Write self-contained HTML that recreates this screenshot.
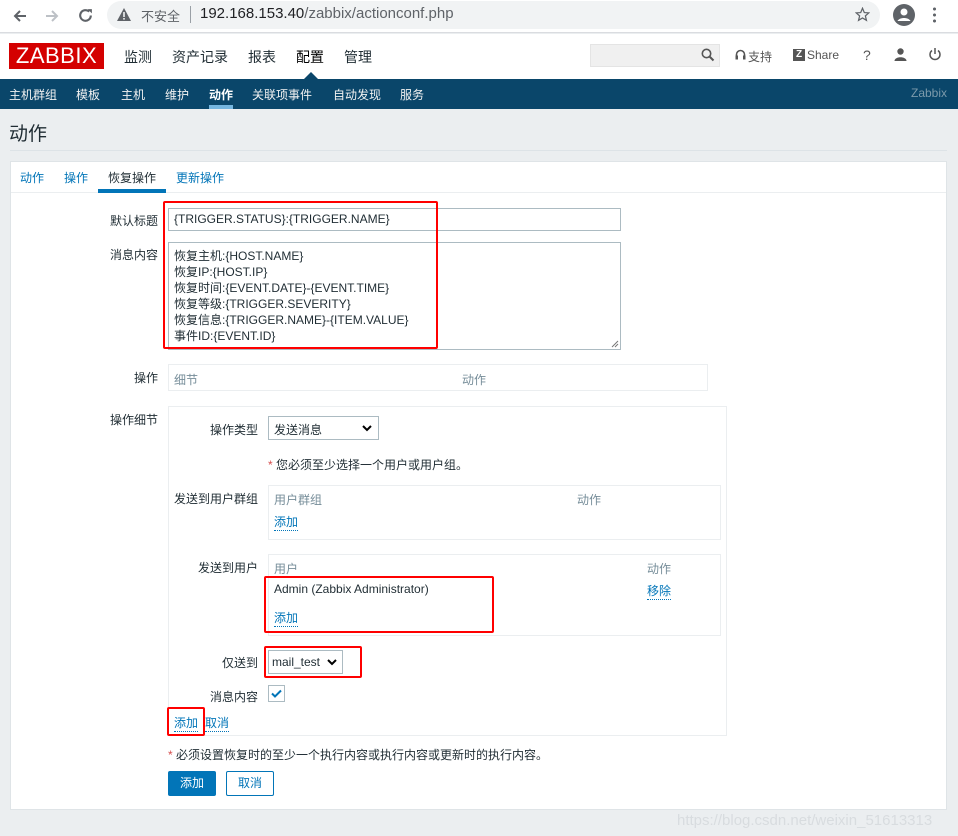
<!DOCTYPE html>
<html><head><meta charset="utf-8"><style>
*{margin:0;padding:0;box-sizing:border-box}
body{width:958px;height:836px;background:#ebeef0;font-family:"Liberation Sans","Noto Sans CJK SC",sans-serif;font-size:12px;color:#1f2c33;position:relative;overflow:hidden}
.a{position:absolute;white-space:nowrap}
.lnk{color:#0275b8;border-bottom:1px dotted #0275b8}
.gray{color:#768d99}
.red{position:absolute;border:2px solid #f00;border-radius:2px}
.inp{position:absolute;border:1px solid #acbbc2;background:#fff}
</style></head><body>
<div class="a" style="left:0;top:0;width:958px;height:33px;background:#fff;border-bottom:1px solid #dadce0"></div>
<svg class="a" style="left:12px;top:8px" width="16" height="16" viewBox="0 0 16 16"><path d="M14 8H3M8 3L3 8l5 5" stroke="#5f6368" stroke-width="2" fill="none"/></svg>
<svg class="a" style="left:44px;top:8px" width="16" height="16" viewBox="0 0 16 16"><path d="M2 8h11M8 3l5 5-5 5" stroke="#bdc1c6" stroke-width="2" fill="none"/></svg>
<svg class="a" style="left:77px;top:7px" width="17" height="17" viewBox="0 0 16 16"><path d="M13 8a5 5 0 1 1-1.5-3.6" stroke="#5f6368" stroke-width="2" fill="none"/><path d="M10 2h4v4z" fill="#5f6368"/></svg>
<div class="a" style="left:107px;top:1px;width:773px;height:28px;background:#f1f3f4;border-radius:14px"></div>
<svg class="a" style="left:117px;top:8px" width="14" height="13" viewBox="0 0 14 13"><path d="M7 0L14 13H0z" fill="#5f6368"/><rect x="6.2" y="4" width="1.6" height="5" fill="#f1f3f4"/><rect x="6.2" y="10" width="1.6" height="1.6" fill="#f1f3f4"/></svg>
<div class="a" style="left:141px;top:6px;font-size:13px;color:#5f6368">不安全</div>
<div class="a" style="left:190px;top:6px;width:1px;height:17px;background:#9aa0a6"></div>
<div class="a" style="left:200px;top:5px;font-size:15px;color:#202124">192.168.153.40<span style="color:#5f6368">/zabbix/actionconf.php</span></div>
<svg class="a" style="left:855px;top:7px" width="15" height="15" viewBox="0 0 24 24"><path d="M12 2l2.9 6.9 7.1.6-5.4 4.7 1.7 7.1L12 17.5 5.7 21.3l1.7-7.1L2 9.5l7.1-.6z" stroke="#5f6368" stroke-width="2" fill="none"/></svg>
<svg class="a" style="left:893px;top:4px" width="22" height="22" viewBox="0 0 22 22"><circle cx="11" cy="11" r="11" fill="#5f6368"/><circle cx="11" cy="8" r="3.5" fill="#fff"/><path d="M4.5 17c2-4 11-4 13 0" fill="#fff"/></svg>
<div class="a" style="left:933px;top:6px;width:3px;height:18px;background:radial-gradient(circle,#5f6368 1.4px,transparent 1.6px) 0 0/3px 6px"></div>
<div class="a" style="left:0;top:34px;width:958px;height:45px;background:#fff"></div>
<div class="a" style="left:9px;top:43px;width:95px;height:26px;background:#d40000;color:#fff;font-size:22px;line-height:26px;text-align:center;letter-spacing:0.5px">ZABBIX</div>
<div class="a" style="left:124px;top:47px;font-size:14px">监测</div>
<div class="a" style="left:172px;top:47px;font-size:14px">资产记录</div>
<div class="a" style="left:248px;top:47px;font-size:14px">报表</div>
<div class="a" style="left:296px;top:47px;font-size:14px;color:#000">配置</div>
<div class="a" style="left:344px;top:47px;font-size:14px">管理</div>
<div class="a" style="left:304px;top:72px;width:0;height:0;border-left:7px solid transparent;border-right:7px solid transparent;border-bottom:7px solid #0a466a"></div>
<div class="a" style="left:590px;top:44px;width:130px;height:23px;background:#f0f0f0;border:1px solid #e4e4e4"></div>
<svg class="a" style="left:701px;top:48px" width="14" height="14" viewBox="0 0 14 14"><circle cx="5.5" cy="5.5" r="4.2" stroke="#555" stroke-width="1.6" fill="none"/><path d="M8.5 8.5l4 4" stroke="#555" stroke-width="2"/></svg>
<svg class="a" style="left:735px;top:49px" width="11" height="12" viewBox="0 0 11 12"><path d="M1.5 8V5.5a4 4 0 0 1 8 0V8" stroke="#555" stroke-width="1.6" fill="none"/><rect x="0.5" y="6.5" width="2.5" height="4" fill="#555"/><rect x="8" y="6.5" width="2.5" height="4" fill="#555"/></svg>
<div class="a" style="left:748px;top:48px;font-size:12px;color:#555">支持</div>
<div class="a" style="left:793px;top:49px;width:12px;height:12px;background:#555;color:#fff;font-size:10px;line-height:12px;text-align:center;font-weight:bold">Z</div>
<div class="a" style="left:807px;top:48px;font-size:12px;color:#555">Share</div>
<div class="a" style="left:863px;top:47px;font-size:14px;color:#555">?</div>
<svg class="a" style="left:894px;top:48px" width="13" height="13" viewBox="0 0 13 13"><circle cx="6.5" cy="3.5" r="3.2" fill="#555"/><path d="M0.5 13c0-5 12-5 12 0z" fill="#555"/></svg>
<svg class="a" style="left:928px;top:47px" width="14" height="14" viewBox="0 0 14 14"><path d="M4 3.5a5 5 0 1 0 6 0" stroke="#555" stroke-width="1.5" fill="none"/><path d="M7 1v6" stroke="#555" stroke-width="1.5"/></svg>
<div class="a" style="left:0;top:79px;width:958px;height:30px;background:#0a466a"></div>
<div class="a" style="left:9px;top:86px;color:#f2f2f2">主机群组</div>
<div class="a" style="left:76px;top:86px;color:#f2f2f2">模板</div>
<div class="a" style="left:121px;top:86px;color:#f2f2f2">主机</div>
<div class="a" style="left:165px;top:86px;color:#f2f2f2">维护</div>
<div class="a" style="left:209px;top:86px;color:#fff;font-weight:bold">动作</div>
<div class="a" style="left:209px;top:105px;width:24px;height:4px;background:#75b6e0"></div>
<div class="a" style="left:252px;top:86px;color:#f2f2f2">关联项事件</div>
<div class="a" style="left:333px;top:86px;color:#f2f2f2">自动发现</div>
<div class="a" style="left:400px;top:86px;color:#f2f2f2">服务</div>
<div class="a" style="left:911px;top:86px;color:#7c9aab">Zabbix</div>
<div class="a" style="left:9px;top:119px;font-size:19px">动作</div>
<div class="a" style="left:10px;top:150px;width:937px;height:1px;background:#dde3e7"></div>
<div class="a" style="left:10px;top:161px;width:937px;height:649px;background:#fff;border:1px solid #dfe4e7"></div>
<div class="a" style="left:11px;top:192px;width:935px;height:1px;background:#ebeef0"></div>
<div class="a" style="left:20px;top:169px;color:#0275b8">动作</div>
<div class="a" style="left:64px;top:169px;color:#0275b8">操作</div>
<div class="a" style="left:108px;top:169px">恢复操作</div>
<div class="a" style="left:98px;top:189px;width:68px;height:4px;background:#0275b8"></div>
<div class="a" style="left:176px;top:169px;color:#0275b8">更新操作</div>
<div class="a" style="left:110px;top:212px">默认标题</div>
<div class="inp" style="left:168px;top:208px;width:453px;height:23px"></div>
<div class="a" style="left:174px;top:212px">{TRIGGER.STATUS}:{TRIGGER.NAME}</div>
<div class="a" style="left:110px;top:246px">消息内容</div>
<div class="inp" style="left:168px;top:242px;width:453px;height:108px"></div>
<div class="a" style="left:174px;top:248px;line-height:16px">恢复主机:{HOST.NAME}<br>恢复IP:{HOST.IP}<br>恢复时间:{EVENT.DATE}-{EVENT.TIME}<br>恢复等级:{TRIGGER.SEVERITY}<br>恢复信息:{TRIGGER.NAME}-{ITEM.VALUE}<br>事件ID:{EVENT.ID}</div>
<svg class="a" style="left:611px;top:340px" width="8" height="8" viewBox="0 0 8 8"><path d="M7 1L1 7M7 4L4 7" stroke="#777" stroke-width="1"/></svg>
<div class="red" style="left:163px;top:201px;width:275px;height:148px"></div>
<div class="a" style="left:134px;top:369px">操作</div>
<div class="a" style="left:168px;top:364px;width:540px;height:27px;border:1px solid #ebeef0"></div>
<div class="a gray" style="left:174px;top:371px">细节</div>
<div class="a gray" style="left:462px;top:371px">动作</div>
<div class="a" style="left:110px;top:411px">操作细节</div>
<div class="a" style="left:168px;top:406px;width:559px;height:330px;border:1px solid #ebeef0"></div>
<div class="a" style="left:210px;top:421px">操作类型</div>
<div class="inp" style="left:268px;top:416px;width:111px;height:24px"></div>
<div class="a" style="left:274px;top:421px">发送消息</div>
<svg class="a" style="left:362px;top:425px" width="10" height="7" viewBox="0 0 10 7"><path d="M1 1l4 4 4-4" stroke="#000" stroke-width="2" fill="none"/></svg>
<div class="a" style="left:268px;top:456px"><span style="color:#d64e4e">*</span> 您必须至少选择一个用户或用户组。</div>
<div class="a" style="left:174px;top:490px">发送到用户群组</div>
<div class="a" style="left:268px;top:485px;width:453px;height:55px;border:1px solid #ebeef0"></div>
<div class="a gray" style="left:274px;top:491px">用户群组</div>
<div class="a gray" style="left:577px;top:491px">动作</div>
<div class="a lnk" style="left:274px;top:513px">添加</div>
<div class="a" style="left:198px;top:559px">发送到用户</div>
<div class="a" style="left:268px;top:554px;width:453px;height:82px;border:1px solid #ebeef0"></div>
<div class="a gray" style="left:274px;top:560px">用户</div>
<div class="a gray" style="left:647px;top:560px">动作</div>
<div class="a" style="left:274px;top:582px">Admin (Zabbix Administrator)</div>
<div class="a lnk" style="left:647px;top:582px">移除</div>
<div class="a lnk" style="left:274px;top:609px">添加</div>
<div class="red" style="left:264px;top:576px;width:230px;height:57px"></div>
<div class="a" style="left:222px;top:654px">仅送到</div>
<div class="inp" style="left:268px;top:650px;width:75px;height:24px"></div>
<div class="a" style="left:272px;top:655px">mail_test</div>
<svg class="a" style="left:327px;top:659px" width="10" height="7" viewBox="0 0 10 7"><path d="M1 1l4 4 4-4" stroke="#000" stroke-width="2" fill="none"/></svg>
<div class="red" style="left:264px;top:646px;width:98px;height:32px"></div>
<div class="a" style="left:210px;top:688px">消息内容</div>
<div class="a" style="left:268px;top:685px;width:17px;height:17px;border:1px solid #acbbc2;background:#fff"></div>
<svg class="a" style="left:271px;top:689px" width="11" height="9" viewBox="0 0 11 9"><path d="M1 4.5l3 3 6-6" stroke="#0275b8" stroke-width="2" fill="none"/></svg>
<div class="a lnk" style="left:174px;top:714px">添加</div>
<div class="a lnk" style="left:205px;top:714px">取消</div>
<div class="red" style="left:167px;top:707px;width:38px;height:29px"></div>
<div class="a" style="left:168px;top:746px"><span style="color:#d64e4e">*</span> 必须设置恢复时的至少一个执行内容或执行内容或更新时的执行内容。</div>
<div class="a" style="left:168px;top:771px;width:48px;height:25px;background:#0275b8;border-radius:2px;color:#fff;text-align:center;line-height:25px">添加</div>
<div class="a" style="left:226px;top:771px;width:48px;height:25px;border:1px solid #0275b8;border-radius:2px;color:#0275b8;text-align:center;line-height:23px">取消</div>
<div class="a" style="left:677px;top:812px;font-size:15px;color:#d8dcdf">https://blog.csdn.net/weixin_51613313</div>
</body></html>
